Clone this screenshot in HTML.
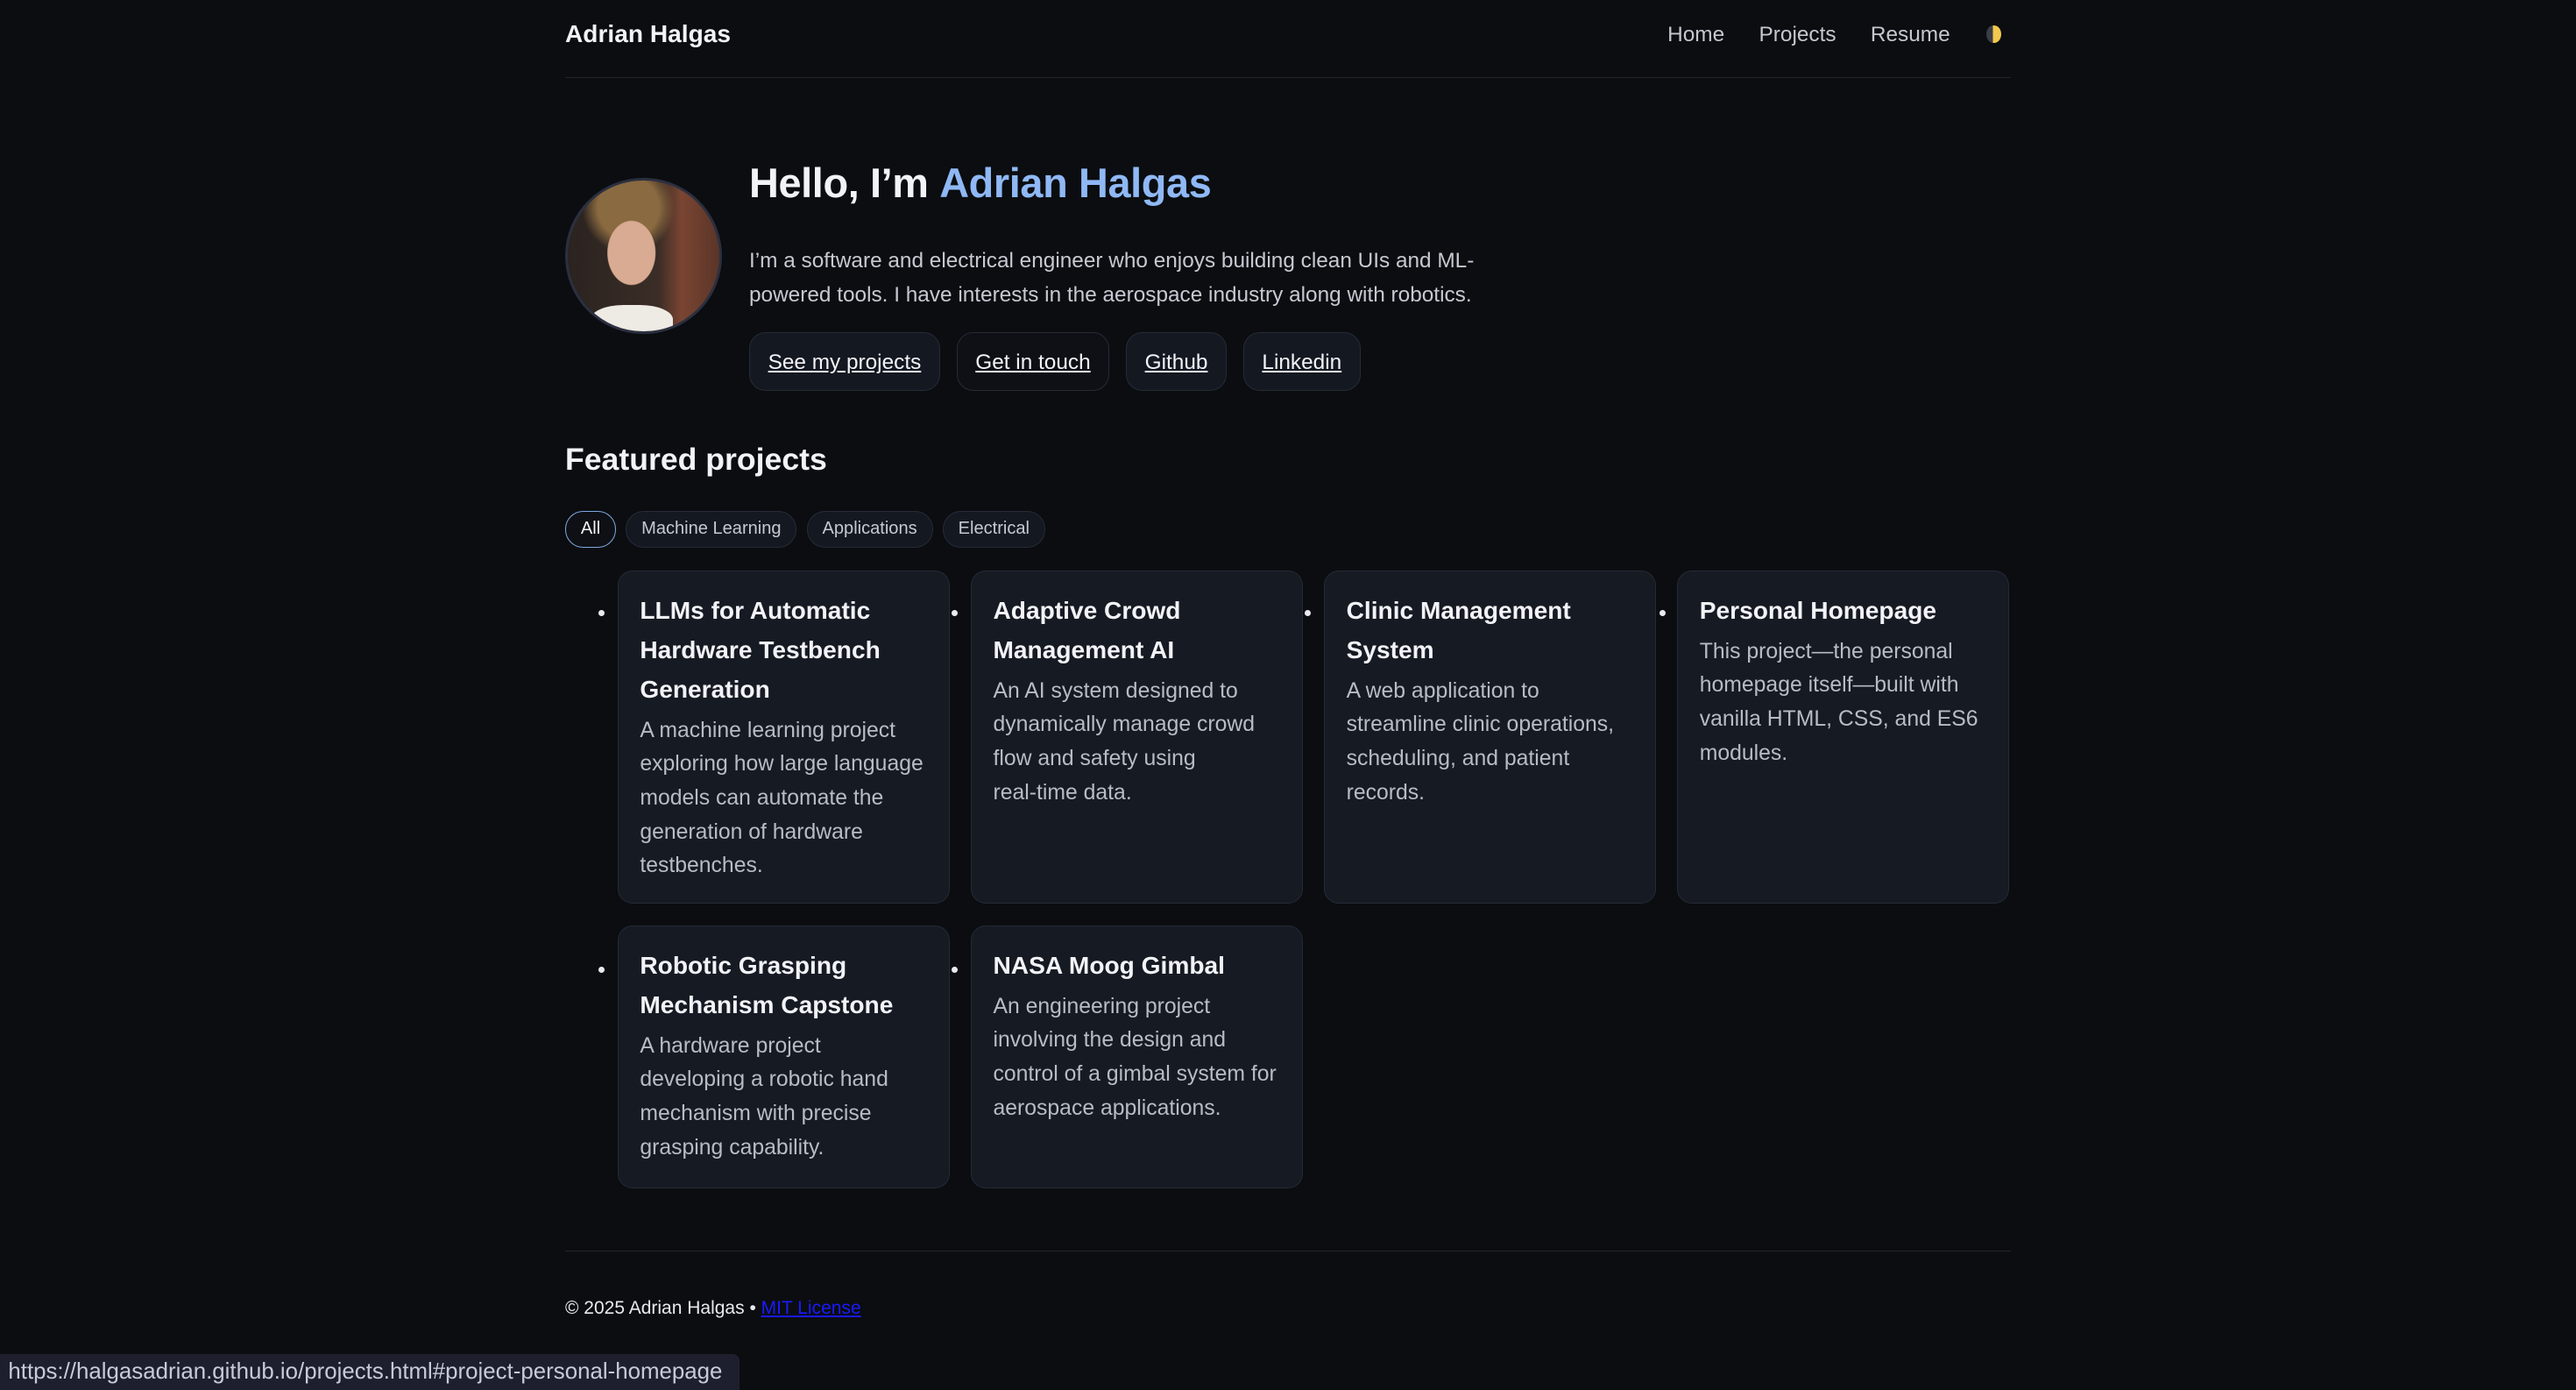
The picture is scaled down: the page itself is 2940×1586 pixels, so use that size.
<!DOCTYPE html>
<html><head><meta charset="utf-8"><style>
html,body{margin:0;padding:0;background:#0b0d10;}
body{width:1568px;height:846px;zoom:1.875;overflow:hidden;position:relative;font-family:"Liberation Sans",sans-serif;color:#e8eaf0;}
.wrap{position:absolute;left:344px;width:880px;top:0;}
.hdr{height:47px;border-bottom:1px solid #22252e;position:relative;}
.brand{position:absolute;left:0;top:12px;font-weight:bold;font-size:15px;color:#f2f3f7;}
.nav{position:absolute;right:6px;top:14px;font-size:13px;color:#c4c7d0;}
.nav span{margin-left:21px;}
.moon{display:inline-block;width:9px;height:11px;border-radius:50%;background:linear-gradient(90deg,#3a3d48 45%,#f2c94c 45%);vertical-align:-1px;margin-left:22px;}
.av{position:absolute;left:0;top:108px;width:92px;height:92px;border-radius:50%;border:2px solid #2b3040;background:radial-gradient(ellipse 24px 32px at 42% 48%,#d8ab92 60%,transparent 62%),radial-gradient(circle at 40% 18%,#8a6a40 20%,transparent 30%),linear-gradient(90deg,#2a2320 0%,#3b2d26 60%,#7a4532 75%,#5a3528 100%);overflow:hidden;}
.av:after{content:"";position:absolute;left:14px;bottom:-6px;width:50px;height:22px;background:#eeeae4;border-radius:40% 40% 0 0;}
h1{position:absolute;left:112px;top:97px;margin:0;font-size:25px;font-weight:bold;color:#f2f3f7;letter-spacing:-0.2px;}
h1 b{color:#8fb8f5;}
.p{position:absolute;left:112px;top:149px;width:460px;font-size:13px;line-height:20.5px;color:#c6c9d2;}
.btns{position:absolute;left:112px;top:202px;font-size:0;}
.btn{display:inline-block;height:35px;line-height:36px;padding:0 11px;border:1px solid #262b38;border-radius:10px;background:#141821;font-size:13px;color:#f2f3f7;text-decoration:underline;margin-right:10px;}
.btn.g{background:#0e1015;}
h2{position:absolute;left:0;top:269px;margin:0;font-size:19px;font-weight:bold;color:#f2f3f7;}
.chips{position:absolute;left:0;top:311px;font-size:0;}
.chip{display:inline-block;height:21px;line-height:21px;padding:0 9px;border:1px solid #262b38;border-radius:11px;background:#141821;font-size:10.7px;color:#c6c9d2;margin-right:6px;}
.chip.a{border-color:#7fa8e0;background:#0e1015;color:#f2f3f7;}
.card{position:absolute;width:202px;border:1px solid #252a36;border-radius:9px;background:#161a23;box-sizing:border-box;padding:12px 13px;}
.card h3{margin:0;font-size:15px;line-height:24px;font-weight:bold;color:#f2f3f7;}
.card p{margin:3px 0 0;font-size:13.2px;line-height:20.6px;color:#b8bcc6;}
.dot{position:absolute;width:4px;height:4px;border-radius:50%;background:#e8eaf0;}
.foot{position:absolute;left:0;top:761px;width:880px;border-top:1px solid #22252e;}
.ft{position:absolute;left:0;top:790px;font-size:11.2px;color:#e8eaf0;}
.ft u{color:#1a1aff;}
.status{position:absolute;left:0;top:824px;height:22px;width:450px;background:#1e1f2e;border-radius:0 4px 0 0;font-size:13.8px;line-height:22px;color:#c8cad8;padding-left:5px;box-sizing:border-box;}
</style></head><body>
<div class="wrap">
<div class="hdr"><div class="brand">Adrian Halgas</div><div class="nav"><span>Home</span><span>Projects</span><span>Resume</span><i class="moon"></i></div></div>
<div class="av"></div>
<h1>Hello, I’m <b>Adrian Halgas</b></h1>
<div class="p">I’m a software and electrical engineer who enjoys building clean UIs and ML-powered tools. I have interests in the aerospace industry along with robotics.</div>
<div class="btns"><span class="btn">See my projects</span><span class="btn g">Get in touch</span><span class="btn">Github</span><span class="btn">Linkedin</span></div>
<h2>Featured projects</h2>
<div class="chips"><span class="chip a">All</span><span class="chip">Machine Learning</span><span class="chip">Applications</span><span class="chip">Electrical</span></div>

<i class="dot" style="left:20px;top:371px"></i>
<div class="card" style="left:32px;top:347px;height:203px"><h3>LLMs for Automatic Hardware Testbench Generation</h3><p>A machine learning project exploring how large language models can automate the generation of hardware testbenches.</p></div>
<i class="dot" style="left:235px;top:371px"></i>
<div class="card" style="left:247px;top:347px;height:203px"><h3>Adaptive Crowd Management AI</h3><p>An AI system designed to dynamically manage crowd flow and safety using<br>real-time data.</p></div>
<i class="dot" style="left:450px;top:371px"></i>
<div class="card" style="left:462px;top:347px;height:203px"><h3>Clinic Management System</h3><p>A web application to streamline clinic operations, scheduling, and patient records.</p></div>
<i class="dot" style="left:666px;top:371px"></i>
<div class="card" style="left:677px;top:347px;height:203px"><h3>Personal Homepage</h3><p>This project—the personal homepage itself—built with vanilla HTML, CSS, and ES6 modules.</p></div>
<i class="dot" style="left:20px;top:588px"></i>
<div class="card" style="left:32px;top:563px;height:160px"><h3>Robotic Grasping Mechanism Capstone</h3><p>A hardware project developing a robotic hand mechanism with precise grasping capability.</p></div>
<i class="dot" style="left:235px;top:588px"></i>
<div class="card" style="left:247px;top:563px;height:160px"><h3>NASA Moog Gimbal</h3><p>An engineering project involving the design and control of a gimbal system for aerospace applications.</p></div>

<div class="foot"></div>
<div class="ft">© 2025 Adrian Halgas • <u>MIT License</u></div>
</div>
<div class="status">https://halgasadrian.github.io/projects.html#project-personal-homepage</div>
</body></html>
